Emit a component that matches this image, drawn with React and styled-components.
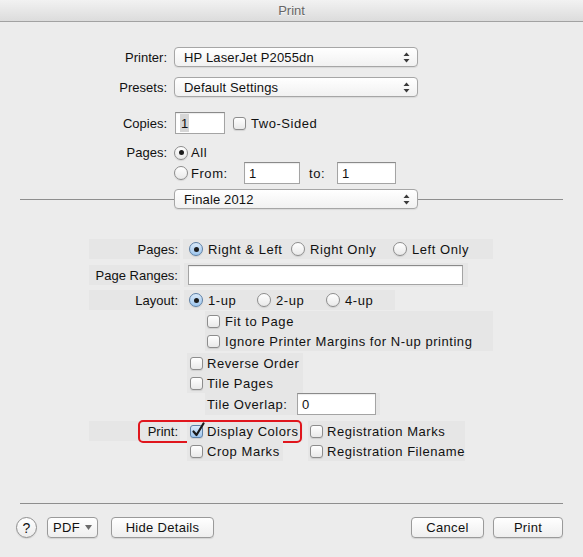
import styled, { createGlobalStyle } from 'styled-components';

const GlobalStyle = createGlobalStyle`
  html, body {
    margin: 0;
    padding: 0;
    background: #ececec;
  }
  body {
    font-family: "Liberation Sans", Arial, sans-serif;
    font-size: 13px;
    color: #111;
  }
`;

const Window = styled.div`
  width: 583px;
  height: 557px;
  display: flex;
  flex-direction: column;
  background: #ececec;
  overflow: hidden;
`;

const TitleBar = styled.div`
  height: 21px;
  flex: none;
  display: flex;
  align-items: center;
  justify-content: center;
  border-bottom: 1px solid #a2a2a2;
  background: linear-gradient(#f2f2f2, #dcdcdc);
  color: #666;
  text-shadow: 0 1px 0 rgba(255, 255, 255, 0.7);
`;

const Row = styled.div`
  display: flex;
  align-items: center;
  height: ${(p) => p.$h || 20}px;
  margin-top: ${(p) => p.$mt || 0}px;
  flex: none;
`;

const Label = styled.div`
  width: 174px;
  box-sizing: border-box;
  padding-right: 7px;
  text-align: right;
`;

const Popup = styled.div`
  width: 244px;
  height: 20px;
  box-sizing: border-box;
  display: flex;
  align-items: center;
  justify-content: space-between;
  padding: 0 7px 0 9px;
  border: 1px solid #a6a6a6;
  border-radius: 4px;
  background: linear-gradient(#ffffff, #f1f1f1);
  box-shadow: 0 1px 1px rgba(0, 0, 0, 0.08);
  letter-spacing: 0.15px;
`;

const Field = styled.div`
  width: ${(p) => p.$w}px;
  height: ${(p) => p.$fh || 22}px;
  margin-left: ${(p) => p.$ml || 0}px;
  box-sizing: border-box;
  display: flex;
  align-items: center;
  padding-left: 4px;
  border: 1px solid #a4a4a4;
  border-top-color: #8a8a8a;
  background: #fff;
  box-shadow: inset 0 1px 1px rgba(0, 0, 0, 0.08);
`;

const Selected = styled.span`
  align-self: stretch;
  display: flex;
  align-items: center;
  background: #d6d6d6;
  padding: 0 1px;
  margin: 1px 0;
`;

const Option = styled.div`
  display: flex;
  align-items: center;
  width: ${(p) => (p.$w ? `${p.$w}px` : 'auto')};
  margin-left: ${(p) => p.$ml || 0}px;
  letter-spacing: 0.55px;
  flex: none;
`;

const Radio = styled.span`
  position: relative;
  width: 14px;
  height: 14px;
  box-sizing: border-box;
  border-radius: 50%;
  margin-right: ${(p) => p.$gap || 3}px;
  border: 1px solid ${(p) => (p.$blue ? '#5d80a6' : '#8d8d8d')};
  background: ${(p) =>
    p.$blue
      ? 'linear-gradient(#d9e9f9, #9ec6ee)'
      : 'linear-gradient(#ffffff, #e9e9e9)'};
  box-shadow: 0 1px 1px rgba(0, 0, 0, 0.1);
  flex: none;

  &::after {
    content: '';
    display: ${(p) => (p.$checked ? 'block' : 'none')};
    position: absolute;
    left: 3.5px;
    top: 3.5px;
    width: 5px;
    height: 5px;
    border-radius: 50%;
    background: #1c1c1c;
  }
`;

const Box = styled.span`
  position: relative;
  width: 13px;
  height: 13px;
  box-sizing: border-box;
  border-radius: 3px;
  margin-right: ${(p) => p.$gap || 4}px;
  border: 1px solid ${(p) => (p.$checked ? '#5d80a6' : '#8d8d8d')};
  background: ${(p) =>
    p.$checked
      ? 'linear-gradient(#d9e9f9, #9ec6ee)'
      : 'linear-gradient(#ffffff, #e9e9e9)'};
  box-shadow: 0 1px 1px rgba(0, 0, 0, 0.1);
  flex: none;

  svg {
    position: absolute;
    left: 0;
    top: -4px;
  }
`;

const SepRow = styled(Row)`
  padding: 0 20px;
`;

const Line = styled.div`
  height: 1px;
  background: #8e8e8e;
  width: ${(p) => (p.$w ? `${p.$w}px` : 'auto')};
  flex: ${(p) => (p.$w ? 'none' : '1')};
`;

const Details = styled.div`
  display: flex;
  flex-direction: column;
`;

const DetailRow = styled(Row)`
  position: relative;
`;

const DLabel = styled.div`
  width: 91px;
  height: 20px;
  margin-left: 89px;
  box-sizing: border-box;
  padding-right: 2px;
  display: flex;
  align-items: center;
  justify-content: flex-end;
  background: ${(p) => (p.$empty ? 'transparent' : '#e6e6e6')};
  flex: none;
`;

const Cell = styled.div`
  display: flex;
  align-items: center;
  height: 100%;
  width: ${(p) => p.$w}px;
  margin-left: ${(p) => p.$ml || 0}px;
  padding-left: ${(p) => p.$pl || 0}px;
  box-sizing: border-box;
  background: #e6e6e6;
  flex: none;
`;

const Highlight = styled.div`
  position: absolute;
  left: 138px;
  top: -1px;
  width: 164px;
  height: 23px;
  box-sizing: border-box;
  border: 2px solid #e0161d;
  border-radius: 5px;
  pointer-events: none;
`;

const Footer = styled(Row)`
  padding: 0 20px 0 16px;
`;

const HelpButton = styled.div`
  width: 21px;
  height: 21px;
  box-sizing: border-box;
  border-radius: 50%;
  border: 1px solid #8f8f8f;
  background: linear-gradient(#ffffff, #ececec);
  box-shadow: 0 1px 1px rgba(0, 0, 0, 0.1);
  display: flex;
  align-items: center;
  justify-content: center;
  font-size: 14px;
  flex: none;
`;

const Button = styled.div`
  width: ${(p) => p.$w}px;
  height: 21px;
  margin-left: ${(p) => p.$ml || 0}px;
  box-sizing: border-box;
  display: flex;
  align-items: center;
  justify-content: center;
  gap: 5px;
  border: 1px solid #9a9a9a;
  border-radius: 4px;
  background: linear-gradient(#ffffff, #eeeeee);
  box-shadow: 0 1px 1px rgba(0, 0, 0, 0.1);
  letter-spacing: 0.3px;
  flex: none;
`;

const Spacer = styled.div`
  flex: 1;
`;

const Arrows = () => (
  <svg width="7" height="11" viewBox="0 0 7 11">
    <path d="M3.5 0.5 L6.5 4 L0.5 4 Z" fill="#3a3a3a" />
    <path d="M3.5 10.5 L6.5 7 L0.5 7 Z" fill="#3a3a3a" />
  </svg>
);

const Check = () => (
  <svg width="15" height="16" viewBox="0 0 15 16">
    <path
      d="M2.5 9.5 L5.5 13 L12.5 1.5"
      fill="none"
      stroke="#1a1a1a"
      strokeWidth="2.2"
      strokeLinecap="round"
      strokeLinejoin="round"
    />
  </svg>
);

const CheckOption = ({ label, checked, gap, ml }) => (
  <Option $ml={ml}>
    <Box $checked={checked} $gap={gap}>
      {checked && <Check />}
    </Box>
    {label}
  </Option>
);

const RadioOption = ({ label, checked, blue, w, gap }) => (
  <Option $w={w}>
    <Radio $checked={checked} $blue={blue} $gap={gap} />
    {label}
  </Option>
);

export default function App() {
  return (
    <Window>
      <GlobalStyle />
      <TitleBar>Print</TitleBar>

      <Row $mt={25}>
        <Label>Printer:</Label>
        <Popup>
          HP LaserJet P2055dn
          <Arrows />
        </Popup>
      </Row>
      <Row $mt={10}>
        <Label>Presets:</Label>
        <Popup>
          Default Settings
          <Arrows />
        </Popup>
      </Row>
      <Row $mt={15} $h={22}>
        <Label>Copies:</Label>
        <Field $w={50} $ml={1}>
          <Selected>1</Selected>
        </Field>
        <CheckOption label="Two-Sided" ml={8} gap={5} />
      </Row>
      <Row $mt={9} $h={19}>
        <Label>Pages:</Label>
        <RadioOption label="All" checked />
      </Row>
      <Row $h={22}>
        <Label />
        <RadioOption label="From:" w={70} />
        <Field $w={56}>1</Field>
        <Option $w={28} $ml={9}>to:</Option>
        <Field $w={59}>1</Field>
      </Row>
      <SepRow $mt={5}>
        <Line $w={154} />
        <Popup>
          Finale 2012
          <Arrows />
        </Popup>
        <Line />
      </SepRow>

      <Details>
        <DetailRow $mt={30}>
          <DLabel>Pages:</DLabel>
          <Cell $w={310} $ml={3} $pl={6}>
            <RadioOption label="Right & Left" checked blue gap={5} w={102} />
            <RadioOption label="Right Only" gap={5} w={102} />
            <RadioOption label="Left Only" gap={5} />
          </Cell>
        </DetailRow>
        <DetailRow $mt={4} $h={24}>
          <DLabel>Page Ranges:</DLabel>
          <Cell $w={284} $ml={4} $pl={4}>
            <Field $w={275} $fh={20} />
          </Cell>
        </DetailRow>
        <DetailRow $mt={3}>
          <DLabel>Layout:</DLabel>
          <Cell $w={211} $ml={4} $pl={5}>
            <RadioOption label="1-up" checked blue gap={5} w={68} />
            <RadioOption label="2-up" gap={5} w={69} />
            <RadioOption label="4-up" gap={5} />
          </Cell>
        </DetailRow>
        <DetailRow $mt={1}>
          <DLabel $empty />
          <Cell $w={288} $ml={25} $pl={2}>
            <CheckOption label="Fit to Page" gap={5} />
          </Cell>
        </DetailRow>
        <DetailRow>
          <DLabel $empty />
          <Cell $w={288} $ml={25} $pl={2}>
            <CheckOption label="Ignore Printer Margins for N-up printing" gap={5} />
          </Cell>
        </DetailRow>
        <DetailRow $mt={2}>
          <DLabel $empty />
          <Cell $w={116} $ml={7} $pl={3}>
            <CheckOption label="Reverse Order" />
          </Cell>
        </DetailRow>
        <DetailRow>
          <DLabel $empty />
          <Cell $w={116} $ml={7} $pl={3}>
            <CheckOption label="Tile Pages" />
          </Cell>
        </DetailRow>
        <DetailRow $h={22}>
          <DLabel $empty />
          <Cell $w={175} $ml={25} $pl={2}>
            <Option $w={90}>Tile Overlap:</Option>
            <Field $w={79}>0</Field>
          </Cell>
        </DetailRow>
        <DetailRow $mt={6}>
          <DLabel>Print:</DLabel>
          <Cell $w={116} $ml={7} $pl={3}>
            <CheckOption label="Display Colors" checked />
          </Cell>
          <Cell $w={157} $ml={5} $pl={2}>
            <CheckOption label="Registration Marks" />
          </Cell>
          <Highlight />
        </DetailRow>
        <DetailRow>
          <DLabel $empty />
          <Cell $w={96} $ml={7} $pl={3}>
            <CheckOption label="Crop Marks" />
          </Cell>
          <Cell $w={157} $ml={25} $pl={2}>
            <CheckOption label="Registration Filename" />
          </Cell>
        </DetailRow>
      </Details>

      <SepRow $mt={42} $h={1}>
        <Line />
      </SepRow>

      <Footer $mt={13} $h={21}>
        <HelpButton>?</HelpButton>
        <Button $w={51} $ml={10}>
          PDF
          <svg width="7" height="5" viewBox="0 0 7 5">
            <path d="M0 0 L7 0 L3.5 5 Z" fill="#6b6b6b" />
          </svg>
        </Button>
        <Button $w={103} $ml={13}>Hide Details</Button>
        <Spacer />
        <Button $w={73}>Cancel</Button>
        <Button $w={70} $ml={9}>Print</Button>
      </Footer>
    </Window>
  );
}
